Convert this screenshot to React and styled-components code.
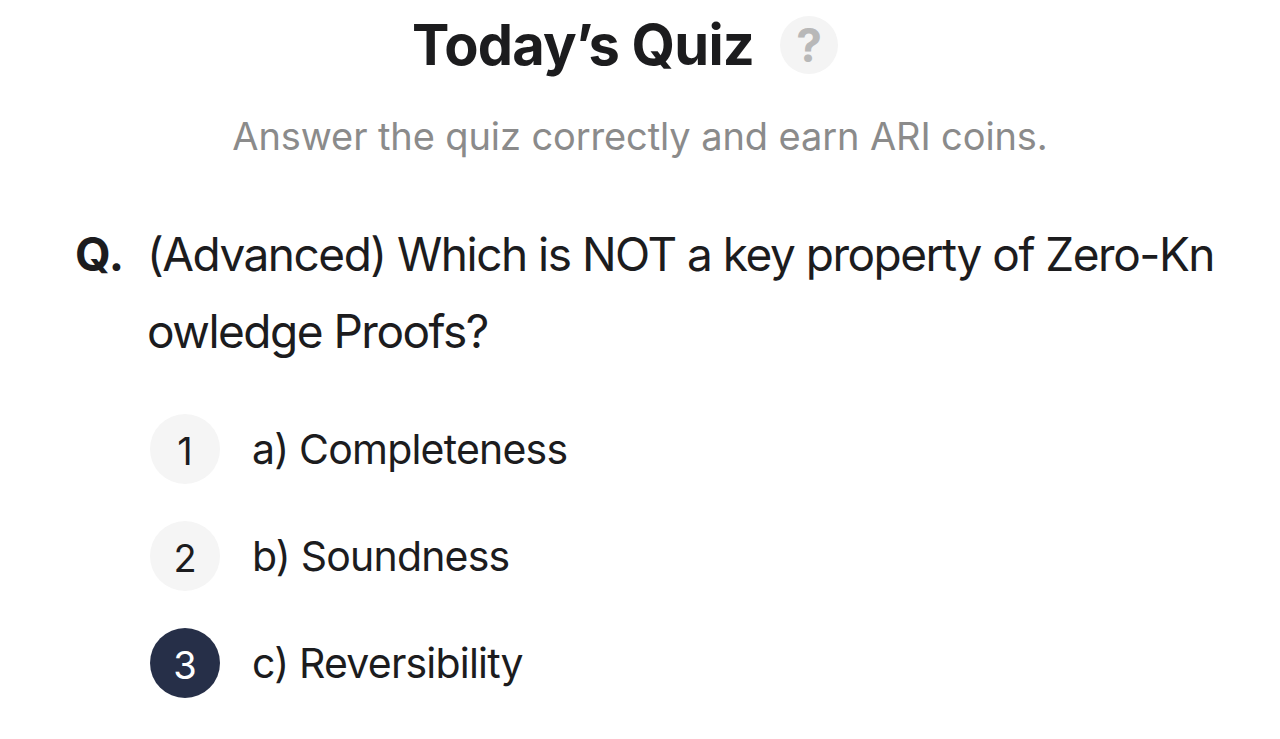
import React from "react";
import styled, { createGlobalStyle } from "styled-components";

const GlobalStyle = createGlobalStyle`
  body {
    margin: 0;
    background: #ffffff;
    font-family: Inter, "Noto Sans", sans-serif;
    color: #1c1c1e;
  }
`;

const Page = styled.div`
  width: 1280px;
  height: 739px;
  overflow: hidden;
  background: #fff;
`;

const Header = styled.div`
  display: flex;
  flex-direction: column;
  align-items: center;
  padding-top: 12px;
`;

const TitleRow = styled.div`
  display: flex;
  align-items: center;
  gap: 26px;
  padding-right: 30px;
`;

const Title = styled.h1`
  margin: 0;
  font-size: 56px;
  font-weight: 700;
  letter-spacing: -0.8px;
  line-height: 66px;
  color: #1c1c1e;
`;

const HelpBadge = styled.div`
  width: 58px;
  height: 58px;
  border-radius: 50%;
  background: #f4f4f4;
  color: #b8b8b8;
  font-size: 46px;
  font-weight: 700;
  display: flex;
  align-items: center;
  justify-content: center;
`;

const Subtitle = styled.p`
  margin: 34px 0 0;
  font-size: 38px;
  font-weight: 400;
  letter-spacing: -0.1px;
  color: #8b8b8b;
  line-height: 48px;
`;

const Question = styled.div`
  display: flex;
  padding: 0 58px 0 75px;
  margin-top: 56px;
  font-size: 46px;
  line-height: 77px;
  letter-spacing: -1.5px;
`;

const QLabel = styled.span`
  flex: none;
  width: 72px;
  font-weight: 700;
  letter-spacing: 0;
`;

const QText = styled.span`
  word-break: break-all;
  font-weight: 400;
`;

const Options = styled.div`
  display: flex;
  flex-direction: column;
  gap: 37px;
  padding-left: 150px;
  margin-top: 44px;
`;

const Option = styled.div`
  display: flex;
  align-items: center;
  gap: 32px;
`;

const Num = styled.div`
  width: 70px;
  height: 70px;
  border-radius: 50%;
  display: flex;
  align-items: center;
  justify-content: center;
  font-size: 38px;
  padding-top: 4px;
  box-sizing: border-box;
  background: ${(p) => (p.$active ? "#262f48" : "#f5f5f5")};
  color: ${(p) => (p.$active ? "#ffffff" : "#1c1c1e")};
`;

const OptionText = styled.span`
  font-size: 41px;
  letter-spacing: -0.8px;
`;

const options = [
  { n: 1, text: "a) Completeness" },
  { n: 2, text: "b) Soundness" },
  { n: 3, text: "c) Reversibility", active: true },
];

export default function App() {
  return (
    <Page>
      <GlobalStyle />
      <Header>
        <TitleRow>
          <Title>Today’s Quiz</Title>
          <HelpBadge>?</HelpBadge>
        </TitleRow>
        <Subtitle>Answer the quiz correctly and earn ARI coins.</Subtitle>
      </Header>
      <Question>
        <QLabel>Q.</QLabel>
        <QText>
          (Advanced) Which is NOT a key property of Zero-Knowledge Proofs?
        </QText>
      </Question>
      <Options>
        {options.map((o) => (
          <Option key={o.n}>
            <Num $active={o.active}>{o.n}</Num>
            <OptionText>{o.text}</OptionText>
          </Option>
        ))}
      </Options>
    </Page>
  );
}
